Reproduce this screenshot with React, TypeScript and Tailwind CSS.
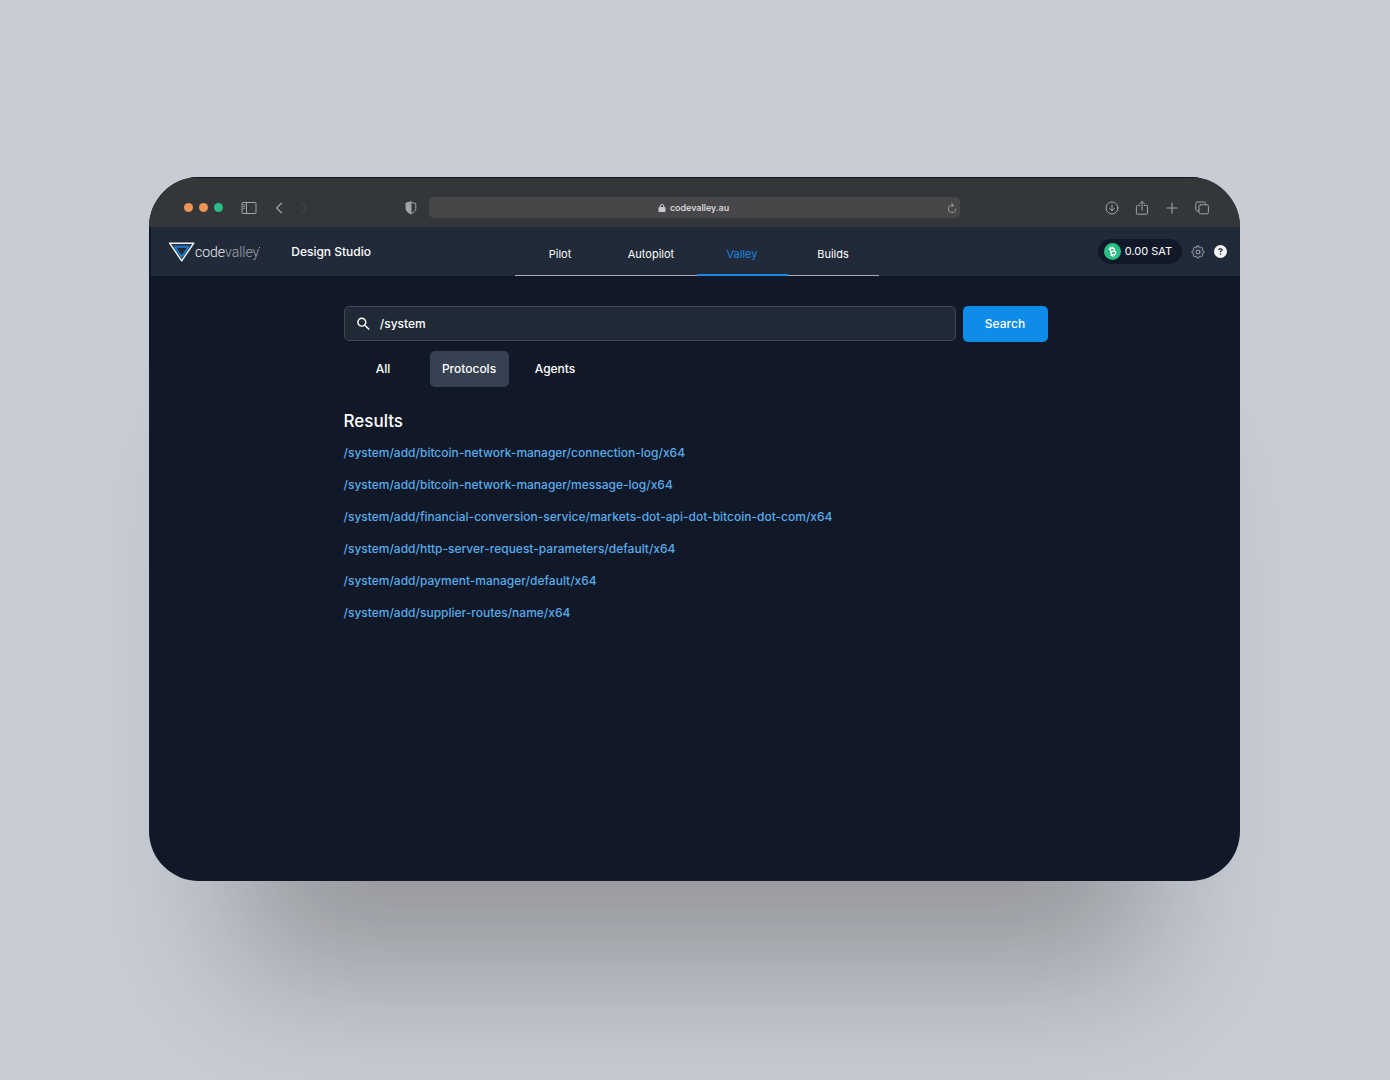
import React, { useState } from 'react';
import { FaCircleQuestion, FaLock } from 'react-icons/fa6';
import { HiOutlineCog8Tooth } from 'react-icons/hi2';
import { MdSearch } from 'react-icons/md';

const TABS = ['Pilot', 'Autopilot', 'Valley', 'Builds'];

const FILTERS = ['All', 'Protocols', 'Agents'];

const RESULTS = [
  '/system/add/bitcoin-network-manager/connection-log/x64',
  '/system/add/bitcoin-network-manager/message-log/x64',
  '/system/add/financial-conversion-service/markets-dot-api-dot-bitcoin-dot-com/x64',
  '/system/add/http-server-request-parameters/default/x64',
  '/system/add/payment-manager/default/x64',
  '/system/add/supplier-routes/name/x64',
];

interface IconProps {
  width?: number;
  height?: number;
  className?: string;
  children: React.ReactNode;
}

const Icon: React.FC<IconProps> = ({ width = 16, height = 16, className, children }) => (
  <svg
    width={width}
    height={height}
    viewBox={`0 0 ${width} ${height}`}
    fill="none"
    stroke="currentColor"
    strokeLinecap="round"
    strokeLinejoin="round"
    className={className}
    aria-hidden="true"
  >
    {children}
  </svg>
);

const BrowserBar: React.FC = () => (
  <div className="flex h-[50px] items-center border-t border-[#111927] bg-[#343739] px-[30px] pt-[10px] text-[#a2a4a6]">
    <div className="flex flex-1 items-center">
      <div className="ml-[5px] flex gap-[6px]">
        <span className="size-[9px] rounded-full bg-[#ec9455]" />
        <span className="size-[9px] rounded-full bg-[#ec9455]" />
        <span className="size-[9px] rounded-full bg-[#28bd83]" />
      </div>
      <button type="button" aria-label="Sidebar" className="ml-[18px]">
        <Icon width={16} height={12}>
          <path d="M2 .5h12a1 1 0 0 1 1 1v9a1 1 0 0 1-1 1H2a1 1 0 0 1-1-1v-9a1 1 0 0 1 1-1zM5.500.5v11" />
          <path d="M2.600 2.800h1.200M2.600 4.600h1.200M2.600 6.400h1.200" strokeWidth="0.900" />
        </Icon>
      </button>
      <button type="button" aria-label="Back" className="ml-[18px]">
        <Icon width={8} height={12}>
          <path d="M6.500 1.200 1.500 6l5 4.800" strokeWidth="1.200" />
        </Icon>
      </button>
      <button type="button" aria-label="Forward" className="ml-[18px] text-[#505355]">
        <Icon width={6} height={12}>
          <path d="M1 1.800 5 6 1 10.200" strokeWidth="0.800" />
        </Icon>
      </button>
      <Icon width={12} height={14} className="mr-3 ml-auto">
        <path d="M6 1.200 10.800 2.600v5c0 2.400-2 3.900-4.800 5.200C3.200 11.500 1.200 10 1.200 7.600v-5z" />
        <path d="M6 1.200v11.600C3.200 11.500 1.200 10 1.200 7.600v-5z" fill="currentColor" />
      </Icon>
    </div>

    <div className="flex h-[21px] w-[531px] items-center rounded-[5px] bg-[#474749] px-[3px]">
      <span className="w-2" />
      <span className="flex flex-1 items-center justify-center gap-1 text-[9px] font-medium text-[#e2e2e4]">
        <FaLock size={8} className="text-[#c9cacd]" aria-hidden="true" />
        codevalley.au
      </span>
      <button type="button" aria-label="Reload">
        <Icon width={10} height={12}>
          <path d="M5 3.200A3.700 3.700 0 1 0 8.700 7M5 3.200h1.400M4.600 1.200l2 2-2 2" strokeWidth="0.900" />
        </Icon>
      </button>
    </div>

    <div className="flex flex-1 items-center justify-end gap-[14px]">
      <button type="button" aria-label="Downloads">
        <Icon>
          <circle cx="8" cy="8" r="6" />
          <path d="M8 5v5.600M5.700 8.500 8 10.800l2.300-2.300" />
        </Icon>
      </button>
      <button type="button" aria-label="Share">
        <Icon>
          <path d="M5.800 5.400H3.400a1 1 0 0 0-1 1v6.800a1 1 0 0 0 1 1h9.200a1 1 0 0 0 1-1V6.400a1 1 0 0 0-1-1h-2.400M8 10V1.500M5.700 3.700 8 1.400l2.300 2.300" />
        </Icon>
      </button>
      <button type="button" aria-label="New tab">
        <Icon>
          <path d="M8 3v10M3 8h10" strokeWidth="1.100" />
        </Icon>
      </button>
      <button type="button" aria-label="Tab overview">
        <Icon>
          <rect x="5" y="4.800" width="9.400" height="9" rx="1.500" />
          <path d="M4.800 11H3.300a1.500 1.500 0 0 1-1.500-1.500V3.500A1.500 1.500 0 0 1 3.300 2h6.800a1.500 1.500 0 0 1 1.500 1.500v1.100" />
        </Icon>
      </button>
    </div>
  </div>
);

const Logo: React.FC = () => (
  <a href="#home" className="ml-[2px] flex items-center">
    <svg width="27" height="20" viewBox="0 0 27 20" fill="none" strokeLinejoin="round" aria-hidden="true">
      <path d="M1.600 1.200h24.200L13.700 18.800z" stroke="#f3f4f6" strokeWidth="1.500" />
      <path d="M6.800 5h13.800l-6.900 9.800z" stroke="#1b87e0" strokeWidth="1.600" />
      <path d="M4.600 3.400h18.200" stroke="#2c4f7d" strokeWidth="1" />
    </svg>
    <span className="font-[Roboto,sans-serif] text-[14px] leading-5 font-light text-[#eceef0]">
      code<span className="text-[#a3a7ac]">valley</span>
    </span>
    <span className="mb-2 size-px bg-[#a3a7ac]" />
  </a>
);

// Bitcoin Cash coin, the B leans to the left
const Coin: React.FC = () => (
  <svg width="17" height="17" viewBox="0 0 17 17" fill="none" aria-hidden="true">
    <circle cx="8.500" cy="8.500" r="8.500" fill="#28bd83" />
    <g transform="rotate(-16 8.500 8.500)" stroke="#fff" strokeWidth="1.300">
      <path d="M5.400 5.200h3.800a1.600 1.600 0 0 1 0 3.300H6.800h2.800a1.700 1.700 0 0 1 0 3.400H5.400M6.800 5.200v6.700" />
      <path d="M7.400 3.300v1.900M9.300 3.300v1.900M7.400 11.900v1.900M9.300 11.900v1.900" strokeWidth="1" />
    </g>
  </svg>
);

const AppHeader: React.FC = () => {
  const [tab, setTab] = useState('Valley');

  return (
    <header className="flex h-[49px] bg-[#202a38] pr-[13px] pl-[15px]">
      <div className="flex flex-1 items-center gap-[31px]">
        <Logo />
        <span className="text-[12px] font-medium text-white">Design Studio</span>
      </div>

      <nav className="grid w-[364px] grid-cols-4">
        {TABS.map((name) => (
          <button
            key={name}
            type="button"
            onClick={() => setTab(name)}
            className={
              name === tab
                ? 'border-b-2 border-[#1b87e0] pt-[7px] text-[11px] text-[#1b87e0]'
                : 'border-b border-[#a9adb3] pt-[6px] text-[11px] text-white'
            }
          >
            {name}
          </button>
        ))}
      </nav>

      <div className="flex flex-1 items-center justify-end gap-2">
        <div className="flex h-[25px] items-center gap-1 rounded-full bg-[#111827] pr-[10px] pl-[6px] text-[11px] text-white">
          <Coin />
          0.00 SAT
        </div>
        <button type="button" aria-label="Settings" className="text-[#c0c4c9]">
          <HiOutlineCog8Tooth size={16} strokeWidth={1.3} />
        </button>
        <button type="button" aria-label="Help" className="text-[#f3f4f6]">
          <FaCircleQuestion size={13} />
        </button>
      </div>
    </header>
  );
};

const SearchPage: React.FC = () => {
  const [query, setQuery] = useState('/system');
  const [filter, setFilter] = useState('Protocols');

  return (
    <main className="mx-auto w-full max-w-[704px] pt-[30px]">
      <form className="flex gap-[7px]" onSubmit={(e) => e.preventDefault()}>
        <label className="flex h-[35px] flex-1 items-center gap-2 rounded-[5px] border border-[#44474c] bg-[#202a37] px-[10px] text-white">
          <MdSearch size={18} aria-hidden="true" />
          <input
            type="text"
            aria-label="Search"
            value={query}
            onChange={(e) => setQuery(e.target.value)}
            className="w-full bg-transparent text-[12px] font-medium outline-none"
          />
        </label>
        <button type="submit" className="h-9 w-[85px] rounded-[5px] bg-[#0d8ce9] text-[12px] font-medium text-white">
          Search
        </button>
      </form>

      <div className="mt-[9px] flex gap-[7px]">
        {FILTERS.map((name) => (
          <button
            key={name}
            type="button"
            onClick={() => setFilter(name)}
            className={
              name === filter
                ? 'h-9 w-[79px] rounded-[5px] bg-[#364151] text-[12px] font-medium text-white'
                : 'h-9 w-[79px] rounded-[5px] text-[12px] font-medium text-white'
            }
          >
            {name}
          </button>
        ))}
      </div>

      <h1 className="mt-[22px] text-[17px] leading-6 font-medium text-white">Results</h1>
      <ul className="mt-1">
        {RESULTS.map((path) => (
          <li key={path} className="text-[12px] leading-8 font-medium text-[#58aceb]">
            <a href={`#${path}`}>{path}</a>
          </li>
        ))}
      </ul>
    </main>
  );
};

const App: React.FC = () => (
  <div className="min-h-screen bg-[#c8ccd4] pt-[177px] pr-[150px] pb-[199px] pl-[149px] font-[Inter,sans-serif]">
    <div className="min-h-[704px] overflow-hidden rounded-[50px] bg-[#111827] shadow-[0_180px_130px_-90px_rgba(22,18,14,0.28)]">
      <BrowserBar />
      <div className="pl-[2px]">
        <AppHeader />
        <SearchPage />
      </div>
    </div>
  </div>
);

export default App;
